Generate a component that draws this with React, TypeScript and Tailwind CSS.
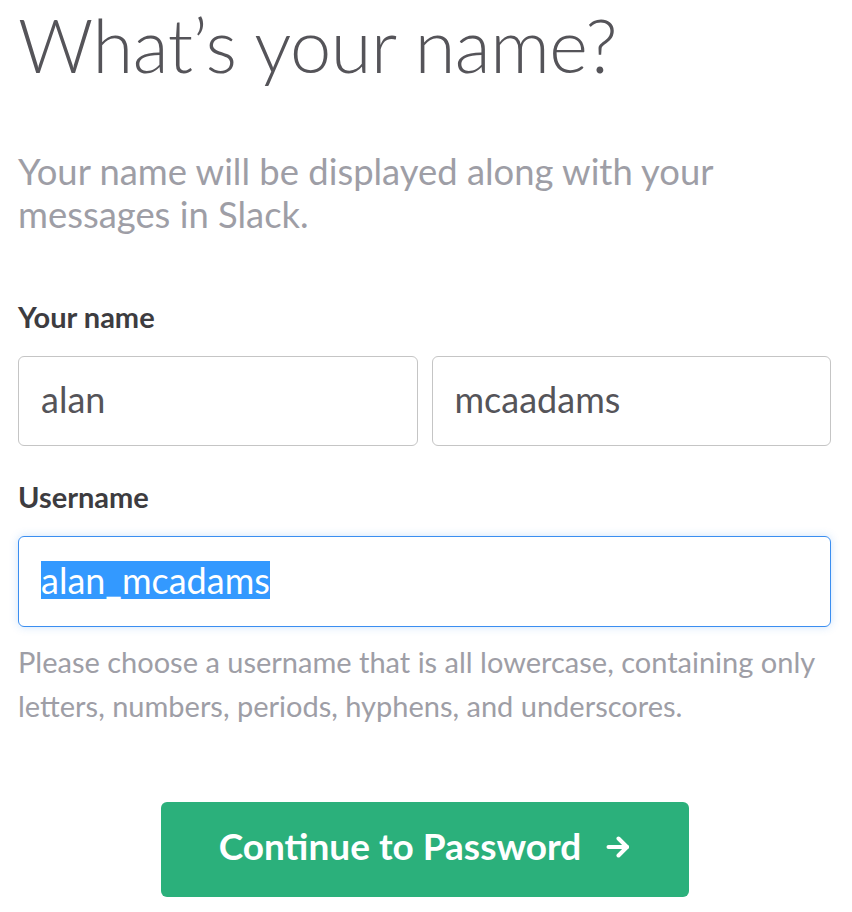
import React from "react";

export default function App() {
  return (
    <div className="min-h-screen bg-white font-['Lato','Noto_Sans',sans-serif] pl-[18px] pr-[21px]">
      <h1 className="text-[74px] leading-[89px] font-light text-[#555459] tracking-[-0.5px]">
        What’s your name?
      </h1>
      <p className="mt-[61px] text-[36.4px] leading-[43px] text-[#9e9ea6]">
        Your name will be displayed along with your messages in Slack.
      </p>
      <div className="mt-[63px] text-[29px] leading-[35px] font-bold text-[#3d3c40]">Your name</div>
      <div className="mt-[22px] flex gap-[14px]">
        <div className="flex-1 h-[90px] flex items-start pt-[23px] px-[22px] border border-[#c5c5c5] rounded-[6px] text-[36px] leading-[38px] text-[#555459]">
          alan
        </div>
        <div className="flex-1 h-[90px] flex items-start pt-[23px] px-[22px] border border-[#c5c5c5] rounded-[6px] text-[36px] leading-[38px] text-[#555459]">
          mcaadams
        </div>
      </div>
      <div className="mt-[33px] text-[29px] leading-[35px] font-bold text-[#3d3c40]">Username</div>
      <div className="mt-[22px] h-[91px] flex items-start pt-[24px] px-[22px] border border-[#3b8ef0] rounded-[6px] shadow-[0_0_8px_rgba(59,142,240,0.25)] text-[36px] leading-[38px]">
        <span className="inline-block h-[38px] bg-[#3399ff] text-white leading-[38px]">alan_mcadams</span>
      </div>
      <p className="mt-[13px] text-[29px] leading-[44px] text-[#9e9ea6]">
        Please choose a username that is all lowercase, containing only letters, numbers, periods, hyphens, and underscores.
      </p>
      <div className="mt-[74px] flex justify-center">
        <button className="w-[528px] h-[95px] pb-[7px] rounded-[6px] bg-[#2bb07b] text-white text-[37px] leading-[44px] font-bold flex items-center justify-center gap-[25px]">
          <span>Continue to Password</span>
          <svg width="24" height="22" viewBox="0 0 24 22" fill="none" stroke="white" strokeWidth="4" strokeLinecap="round" strokeLinejoin="round" className="mt-[2px]">
            <path d="M2.5 11H21" />
            <path d="M12.5 2.5L21 11L12.5 19.5" />
          </svg>
        </button>
      </div>
    </div>
  );
}
